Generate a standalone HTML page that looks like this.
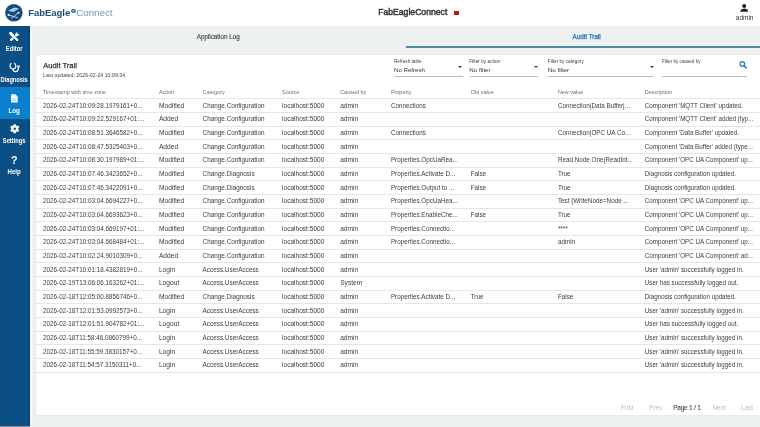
<!DOCTYPE html>
<html>
<head>
<meta charset="utf-8">
<style>
html,body{margin:0;padding:0;width:760px;height:427px;overflow:hidden;background:#eef1f2;font-family:"Liberation Sans",sans-serif;}
#root{position:absolute;left:0;top:0;width:760px;height:427px;will-change:transform;}
.t{position:absolute;white-space:nowrap;line-height:1;}
.abs{position:absolute;}
#header{position:absolute;left:0;top:0;width:760px;height:26px;background:#fff;}
#side{position:absolute;left:0;top:26px;width:30px;height:400px;background:#0c4f84;box-shadow:inset -1.2px 0 0 #0a426f;}
#strip{position:absolute;left:30px;top:26px;width:2px;height:401px;background:#f7f9f9;}
#tabs{position:absolute;left:32px;top:26px;width:728px;height:27px;background:#eef1f2;}
#card{position:absolute;left:35.8px;top:54.5px;width:740px;height:360.5px;background:#fff;box-shadow:0 0 2px rgba(0,0,0,0.10);border-radius:2px;}
.hl{position:absolute;left:35.8px;width:725px;height:0.8px;background:#e6e6e6;}
.ul{position:absolute;height:0.8px;background:#bababa;}
.arrow{position:absolute;width:0;height:0;border-left:2px solid transparent;border-right:2px solid transparent;border-top:2px solid #333;}
.nav{position:absolute;left:-20px;width:68.3px;text-align:center;color:#fff;font-weight:bold;}
</style>
</head>
<body><div id="root">
<div id="header">
  <svg class="abs" style="left:4px;top:3px" width="20" height="20" viewBox="0 0 20 20">
    <circle cx="9.9" cy="9.75" r="8.75" fill="#124a7e"/>
    <path d="M4.2 7.7 L10.1 4.45 L15.0 5.6 L9.4 8.9 Z" fill="#c3d3e2"/>
    <path d="M6.2 6.6 L11.6 7.9 M8.2 5.5 L13.2 6.8 M7.6 8.2 L12.6 5.1" stroke="#8fb0cc" stroke-width="0.35" fill="none"/>
    <path d="M4.5 11.9 L13.6 14.8 M14.5 9.8 L7.5 15.2" stroke="#e6eef5" stroke-width="0.8" fill="none" stroke-linecap="round"/>
    <circle cx="4.5" cy="11.9" r="1.05" fill="#e6eef5"/>
    <circle cx="14.5" cy="9.8" r="1.05" fill="#e6eef5"/>
  </svg>
  <div class="abs" style="left:71.0px;top:8.6px;width:2.6px;height:2.6px;border-radius:50%;background:#7fb0d2;border:0.8px solid #2d6a94"></div>
  <div class="abs" style="left:454.3px;top:11.1px;width:4.5px;height:4.1px;background:#c8101a"></div>

  <svg class="abs" style="left:739px;top:3px" width="10" height="10" viewBox="0 0 10 10">
    <circle cx="5.2" cy="3.1" r="2.0" fill="#222"/>
    <path d="M1.4 8.7 L1.4 7.9 C1.4 6.3 4.2 5.5 5.2 5.5 C6.2 5.5 9.0 6.3 9.0 7.9 L9.0 8.7 Z" fill="#222"/>
  </svg>
</div>

<div id="side">
  <svg class="abs" style="left:9px;top:5.5px" width="11" height="10" viewBox="0 0 11 10">
    <path d="M8.3 2.2 L2.1 7.9" stroke="#fff" stroke-width="2.2" stroke-linecap="round"/>
    <circle cx="8.4" cy="2.1" r="1.95" fill="#fff"/>
    <path d="M7.9 0.2 L8.6 1.9 L10.4 2.4 L10.6 0.2 Z" fill="#0c4f84"/>
    <path d="M2.3 2.1 L8.3 8.0" stroke="#0c4f84" stroke-width="3.0" stroke-linecap="round"/>
    <path d="M2.3 2.1 L8.3 8.0" stroke="#fff" stroke-width="2.3" stroke-linecap="round"/>
    <path d="M1.6 1.2 L3.5 3.2" stroke="#fff" stroke-width="2.9" stroke-linecap="round"/>
  </svg>

  <svg class="abs" style="left:8.5px;top:35.5px" width="12" height="11" viewBox="0 0 12 11">
    <path d="M2.1 1.4 C0.9 2.2 0.6 4.6 1.6 5.8 C2.3 6.7 3.2 6.9 4.0 6.9 C4.8 6.9 5.7 6.6 6.3 5.8 C7.2 4.6 6.9 2.3 5.6 1.5" stroke="#fff" stroke-width="1.2" fill="none" stroke-linecap="round"/>
    <path d="M4.0 6.9 C4.2 8.6 5.2 9.6 6.4 9.6 C8.2 9.6 9.4 8.4 9.4 6.0" stroke="#fff" stroke-width="1.2" fill="none"/>
    <circle cx="9.4" cy="4.6" r="1.4" fill="#fff"/>
    <circle cx="9.4" cy="4.6" r="0.45" fill="#0c4f84"/>
  </svg>

  <div class="abs" style="left:0;top:60.5px;width:30px;height:32.3px;background:#0880cb"></div>
  <svg class="abs" style="left:10.9px;top:68.0px" width="7" height="9" viewBox="0 0 7 9">
    <path d="M0.7 0.2 L4.3 0.2 L6.7 2.6 L6.7 7.9 C6.7 8.3 6.4 8.6 6.0 8.6 L0.8 8.6 C0.4 8.6 0.1 8.3 0.1 7.9 L0.1 0.8 C0.1 0.5 0.4 0.2 0.7 0.2 Z" fill="#fff"/>
    <path d="M4.1 0.4 L4.1 2.8 L6.5 2.8" fill="#cfe3f5"/>
    <rect x="1.6" y="4.5" width="3.5" height="0.75" fill="#7fc0e6"/>
    <rect x="1.6" y="6.2" width="3.5" height="0.75" fill="#7fc0e6"/>
  </svg>

  <svg class="abs" style="left:8.8px;top:96.85px" width="11.5" height="11.5" viewBox="0 0 24 24"><path fill="#fff" fill-rule="evenodd" d="M19.14 12.94c.04-.3.06-.61.06-.94 0-.32-.02-.64-.07-.94l2.03-1.58c.18-.14.23-.41.12-.61l-1.92-3.32c-.12-.22-.37-.29-.59-.22l-2.39.96c-.5-.38-1.03-.7-1.62-.94l-.36-2.54c-.04-.24-.24-.41-.48-.41h-3.84c-.24 0-.43.17-.47.41l-.36 2.54c-.59.24-1.13.57-1.62.94l-2.39-.96c-.22-.08-.47 0-.59.22L2.74 8.87c-.12.21-.08.47.12.61l2.03 1.58c-.05.3-.09.63-.09.94s.02.64.07.94l-2.03 1.58c-.18.14-.23.41-.12.61l1.920 3.32c.12.22.37.29.59.22l2.39-.96c.5.38 1.03.7 1.62.94l.36 2.54c.05.24.24.41.48.41h3.84c.24 0 .44-.17.47-.41l.36-2.54c.59-.24 1.13-.56 1.62-.94l2.39.96c.22.08.47 0 .59-.22l1.92-3.32c.12-.22.07-.47-.12-.61l-2.01-1.58z M12 14.6a2.6 2.6 0 1 0 0-5.2a2.6 2.6 0 1 0 0 5.2z"/></svg>
</div>
<div id="strip"></div>
<div class="abs" style="left:0;top:426px;width:30px;height:1px;background:#8494a6"></div>

<div id="tabs"></div>

<div class="abs" style="left:405.8px;top:46.1px;width:360px;height:1.7px;background:#4d8fa2"></div>

<div id="card"></div>

<!-- filters -->
<div class="arrow" style="left:458.3px;top:66.2px"></div>
<div class="ul" style="left:394.2px;top:76.0px;width:68.4px"></div>
<div class="arrow" style="left:533.5px;top:66.2px"></div>
<div class="ul" style="left:469.5px;top:76.0px;width:68px"></div>
<div class="arrow" style="left:650.1px;top:66.2px"></div>
<div class="ul" style="left:548px;top:76.0px;width:106.3px"></div>
<div class="ul" style="left:662.2px;top:76.0px;width:84.7px"></div>
<svg class="abs" style="left:739px;top:61px" width="8.5" height="8" viewBox="0 0 8.5 8">
  <circle cx="3.3" cy="3.0" r="2.35" stroke="#1f76b5" stroke-width="1.1" fill="none"/>
  <path d="M5.0 4.8 L7.5 7.1" stroke="#1f76b5" stroke-width="1.3" stroke-linecap="round"/>
</svg>

<div class="hl" style="top:98.20px"></div>
<div class="hl" style="top:111.87px"></div>
<div class="hl" style="top:125.54px"></div>
<div class="hl" style="top:139.20px"></div>
<div class="hl" style="top:152.87px"></div>
<div class="hl" style="top:166.54px"></div>
<div class="hl" style="top:180.21px"></div>
<div class="hl" style="top:193.88px"></div>
<div class="hl" style="top:207.54px"></div>
<div class="hl" style="top:221.21px"></div>
<div class="hl" style="top:234.88px"></div>
<div class="hl" style="top:248.55px"></div>
<div class="hl" style="top:262.22px"></div>
<div class="hl" style="top:275.88px"></div>
<div class="hl" style="top:289.55px"></div>
<div class="hl" style="top:303.22px"></div>
<div class="hl" style="top:316.89px"></div>
<div class="hl" style="top:330.56px"></div>
<div class="hl" style="top:344.22px"></div>
<div class="hl" style="top:357.89px"></div>
<div class="hl" style="top:371.56px"></div>
<div class="t" style="left:28.3px;top:8px;font-size:9.6px;color:#1c4d78;font-weight:bold;letter-spacing:-0.1px">FabEagle</div>
<div class="t" style="left:76.3px;top:8px;font-size:9.8px;color:#7097b1;letter-spacing:-0.05px">Connect</div>
<div class="t" style="left:378.2px;top:8px;font-size:8.6px;color:#333;-webkit-text-stroke:0.45px #333;letter-spacing:0.02px">FabEagleConnect</div>
<div class="t" style="left:735.8px;top:15px;font-size:6.47px;color:#333;">admin</div>
<div class="t nav" style="top:46px;font-size:6.4px;color:#fff;font-weight:bold;transform:scaleX(0.897)">Editor</div>
<div class="t nav" style="top:77px;font-size:6.4px;color:#fff;font-weight:bold;transform:scaleX(0.894)">Diagnosis</div>
<div class="t nav" style="top:108px;font-size:6.4px;color:#fff;font-weight:bold;transform:scaleX(0.967)">Log</div>
<div class="t nav" style="top:138px;font-size:6.4px;color:#fff;font-weight:bold;transform:scaleX(0.896)">Settings</div>
<div class="t nav" style="top:155px;font-size:10.7px;color:#fff;font-weight:bold;">?</div>
<div class="t nav" style="top:169px;font-size:6.4px;color:#fff;font-weight:bold;transform:scaleX(0.953)">Help</div>
<div class="t" style="left:196.7px;top:34px;font-size:6.3px;color:#555;-webkit-text-stroke:0.2px #555">Application Log</div>
<div class="t" style="left:572.5px;top:34px;font-size:6.36px;color:#1b72b6;-webkit-text-stroke:0.25px #1b72b6">Audit Trail</div>
<div class="t" style="left:43.2px;top:62px;font-size:7.6px;color:#333;-webkit-text-stroke:0.25px #333">Audit Trail</div>
<div class="t" style="left:43.1px;top:73px;font-size:5.25px;color:#444;">Last updated: 2026-02-24 10:09:34</div>
<div class="t" style="left:394.0px;top:60px;font-size:4.65px;color:#444;">Refresh table</div>
<div class="t" style="left:394.0px;top:67px;font-size:6.1px;color:#333;">No Refresh</div>
<div class="t" style="left:469.3px;top:60px;font-size:4.75px;color:#444;">Filter by action</div>
<div class="t" style="left:469.3px;top:67px;font-size:6.2px;color:#333;">No filter</div>
<div class="t" style="left:547.8px;top:60px;font-size:4.7px;color:#444;">Filter by category</div>
<div class="t" style="left:547.8px;top:67px;font-size:6.2px;color:#333;">No filter</div>
<div class="t" style="left:662.0px;top:60px;font-size:4.6px;color:#444;">Filter by caused by</div>
<div class="t" style="left:621.0px;top:405px;font-size:6.5px;color:#bdbdbd;">First</div>
<div class="t" style="left:649.3px;top:405px;font-size:6.3px;color:#bdbdbd;">Prev</div>
<div class="t" style="left:673.2px;top:405px;font-size:6.5px;color:#4a4a4a;-webkit-text-stroke:0.12px #4a4a4a;letter-spacing:-0.22px">Page 1 / 1</div>
<div class="t" style="left:712.4px;top:405px;font-size:6.4px;color:#bdbdbd;">Next</div>
<div class="t" style="left:741.0px;top:405px;font-size:6.4px;color:#bdbdbd;">Last</div>
<div class="t" style="left:43.0px;top:90px;font-size:5.45px;color:#6e6e6e;">Timestamp with time zone</div>
<div class="t" style="left:158.9px;top:90px;font-size:5.45px;color:#6e6e6e;">Action</div>
<div class="t" style="left:202.6px;top:90px;font-size:5.45px;color:#6e6e6e;">Category</div>
<div class="t" style="left:282.1px;top:90px;font-size:5.45px;color:#6e6e6e;">Source</div>
<div class="t" style="left:340.2px;top:90px;font-size:5.45px;color:#6e6e6e;">Caused by</div>
<div class="t" style="left:390.9px;top:90px;font-size:5.45px;color:#6e6e6e;">Property</div>
<div class="t" style="left:470.7px;top:90px;font-size:5.45px;color:#6e6e6e;">Old value</div>
<div class="t" style="left:557.9px;top:90px;font-size:5.45px;color:#6e6e6e;">New value</div>
<div class="t" style="left:644.8px;top:90px;font-size:5.45px;color:#6e6e6e;">Description</div>
<div class="t" style="left:43.0px;top:103px;font-size:6.32px;color:#3c3c3c;">2026-02-24T10:09:28.1979161+0...</div>
<div class="t" style="left:158.9px;top:103px;font-size:6.7px;color:#3c3c3c;">Modified</div>
<div class="t" style="left:202.6px;top:103px;font-size:6.36px;color:#3c3c3c;">Change.Configuration</div>
<div class="t" style="left:282.1px;top:103px;font-size:6.55px;color:#3c3c3c;">localhost:5000</div>
<div class="t" style="left:340.2px;top:103px;font-size:6.6px;color:#3c3c3c;">admin</div>
<div class="t" style="left:390.9px;top:103px;font-size:6.3px;color:#3c3c3c;">Connections</div>
<div class="t" style="left:557.9px;top:103px;font-size:6.31px;color:#3c3c3c;">Connection|Data Buffer|...</div>
<div class="t" style="left:644.8px;top:103px;font-size:6.28px;color:#3c3c3c;">Component 'MQTT Client' updated.</div>
<div class="t" style="left:43.0px;top:116px;font-size:6.32px;color:#3c3c3c;">2026-02-24T10:09:22.529167+01:...</div>
<div class="t" style="left:158.9px;top:116px;font-size:6.7px;color:#3c3c3c;">Added</div>
<div class="t" style="left:202.6px;top:116px;font-size:6.36px;color:#3c3c3c;">Change.Configuration</div>
<div class="t" style="left:282.1px;top:116px;font-size:6.55px;color:#3c3c3c;">localhost:5000</div>
<div class="t" style="left:340.2px;top:116px;font-size:6.6px;color:#3c3c3c;">admin</div>
<div class="t" style="left:644.8px;top:116px;font-size:6.28px;color:#3c3c3c;">Component 'MQTT Client' added (typ...</div>
<div class="t" style="left:43.0px;top:130px;font-size:6.32px;color:#3c3c3c;">2026-02-24T10:08:51.3646582+0...</div>
<div class="t" style="left:158.9px;top:130px;font-size:6.7px;color:#3c3c3c;">Modified</div>
<div class="t" style="left:202.6px;top:130px;font-size:6.36px;color:#3c3c3c;">Change.Configuration</div>
<div class="t" style="left:282.1px;top:130px;font-size:6.55px;color:#3c3c3c;">localhost:5000</div>
<div class="t" style="left:340.2px;top:130px;font-size:6.6px;color:#3c3c3c;">admin</div>
<div class="t" style="left:390.9px;top:130px;font-size:6.3px;color:#3c3c3c;">Connections</div>
<div class="t" style="left:557.9px;top:130px;font-size:6.31px;color:#3c3c3c;">Connection|OPC UA Co...</div>
<div class="t" style="left:644.8px;top:130px;font-size:6.28px;color:#3c3c3c;">Component 'Data Buffer' updated.</div>
<div class="t" style="left:43.0px;top:144px;font-size:6.32px;color:#3c3c3c;">2026-02-24T10:08:47.5325403+0...</div>
<div class="t" style="left:158.9px;top:144px;font-size:6.7px;color:#3c3c3c;">Added</div>
<div class="t" style="left:202.6px;top:144px;font-size:6.36px;color:#3c3c3c;">Change.Configuration</div>
<div class="t" style="left:282.1px;top:144px;font-size:6.55px;color:#3c3c3c;">localhost:5000</div>
<div class="t" style="left:340.2px;top:144px;font-size:6.6px;color:#3c3c3c;">admin</div>
<div class="t" style="left:644.8px;top:144px;font-size:6.28px;color:#3c3c3c;">Component 'Data Buffer' added (type...</div>
<div class="t" style="left:43.0px;top:157px;font-size:6.32px;color:#3c3c3c;">2026-02-24T10:08:30.197989+01:...</div>
<div class="t" style="left:158.9px;top:157px;font-size:6.7px;color:#3c3c3c;">Modified</div>
<div class="t" style="left:202.6px;top:157px;font-size:6.36px;color:#3c3c3c;">Change.Configuration</div>
<div class="t" style="left:282.1px;top:157px;font-size:6.55px;color:#3c3c3c;">localhost:5000</div>
<div class="t" style="left:340.2px;top:157px;font-size:6.6px;color:#3c3c3c;">admin</div>
<div class="t" style="left:390.9px;top:157px;font-size:6.3px;color:#3c3c3c;">Properties.OpcUaRea...</div>
<div class="t" style="left:557.9px;top:157px;font-size:6.31px;color:#3c3c3c;">Read Node One(ReadInt...</div>
<div class="t" style="left:644.8px;top:157px;font-size:6.28px;color:#3c3c3c;">Component 'OPC UA Component' up...</div>
<div class="t" style="left:43.0px;top:171px;font-size:6.32px;color:#3c3c3c;">2026-02-24T10:07:46.3423652+0...</div>
<div class="t" style="left:158.9px;top:171px;font-size:6.7px;color:#3c3c3c;">Modified</div>
<div class="t" style="left:202.6px;top:171px;font-size:6.36px;color:#3c3c3c;">Change.Diagnosis</div>
<div class="t" style="left:282.1px;top:171px;font-size:6.55px;color:#3c3c3c;">localhost:5000</div>
<div class="t" style="left:340.2px;top:171px;font-size:6.6px;color:#3c3c3c;">admin</div>
<div class="t" style="left:390.9px;top:171px;font-size:6.3px;color:#3c3c3c;">Properties.Activate D...</div>
<div class="t" style="left:470.7px;top:171px;font-size:6.31px;color:#3c3c3c;">False</div>
<div class="t" style="left:557.9px;top:171px;font-size:6.31px;color:#3c3c3c;">True</div>
<div class="t" style="left:644.8px;top:171px;font-size:6.28px;color:#3c3c3c;">Diagnosis configuration updated.</div>
<div class="t" style="left:43.0px;top:185px;font-size:6.32px;color:#3c3c3c;">2026-02-24T10:07:46.3422091+0...</div>
<div class="t" style="left:158.9px;top:185px;font-size:6.7px;color:#3c3c3c;">Modified</div>
<div class="t" style="left:202.6px;top:185px;font-size:6.36px;color:#3c3c3c;">Change.Diagnosis</div>
<div class="t" style="left:282.1px;top:185px;font-size:6.55px;color:#3c3c3c;">localhost:5000</div>
<div class="t" style="left:340.2px;top:185px;font-size:6.6px;color:#3c3c3c;">admin</div>
<div class="t" style="left:390.9px;top:185px;font-size:6.3px;color:#3c3c3c;">Properties.Output to ...</div>
<div class="t" style="left:470.7px;top:185px;font-size:6.31px;color:#3c3c3c;">False</div>
<div class="t" style="left:557.9px;top:185px;font-size:6.31px;color:#3c3c3c;">True</div>
<div class="t" style="left:644.8px;top:185px;font-size:6.28px;color:#3c3c3c;">Diagnosis configuration updated.</div>
<div class="t" style="left:43.0px;top:198px;font-size:6.32px;color:#3c3c3c;">2026-02-24T10:03:04.6694227+0...</div>
<div class="t" style="left:158.9px;top:198px;font-size:6.7px;color:#3c3c3c;">Modified</div>
<div class="t" style="left:202.6px;top:198px;font-size:6.36px;color:#3c3c3c;">Change.Configuration</div>
<div class="t" style="left:282.1px;top:198px;font-size:6.55px;color:#3c3c3c;">localhost:5000</div>
<div class="t" style="left:340.2px;top:198px;font-size:6.6px;color:#3c3c3c;">admin</div>
<div class="t" style="left:390.9px;top:198px;font-size:6.3px;color:#3c3c3c;">Properties.OpcUaHea...</div>
<div class="t" style="left:557.9px;top:198px;font-size:6.31px;color:#3c3c3c;">Test (WriteNode=Node ...</div>
<div class="t" style="left:644.8px;top:198px;font-size:6.28px;color:#3c3c3c;">Component 'OPC UA Component' up...</div>
<div class="t" style="left:43.0px;top:212px;font-size:6.32px;color:#3c3c3c;">2026-02-24T10:03:04.6693623+0...</div>
<div class="t" style="left:158.9px;top:212px;font-size:6.7px;color:#3c3c3c;">Modified</div>
<div class="t" style="left:202.6px;top:212px;font-size:6.36px;color:#3c3c3c;">Change.Configuration</div>
<div class="t" style="left:282.1px;top:212px;font-size:6.55px;color:#3c3c3c;">localhost:5000</div>
<div class="t" style="left:340.2px;top:212px;font-size:6.6px;color:#3c3c3c;">admin</div>
<div class="t" style="left:390.9px;top:212px;font-size:6.3px;color:#3c3c3c;">Properties.EnableChe...</div>
<div class="t" style="left:470.7px;top:212px;font-size:6.31px;color:#3c3c3c;">False</div>
<div class="t" style="left:557.9px;top:212px;font-size:6.31px;color:#3c3c3c;">True</div>
<div class="t" style="left:644.8px;top:212px;font-size:6.28px;color:#3c3c3c;">Component 'OPC UA Component' up...</div>
<div class="t" style="left:43.0px;top:226px;font-size:6.32px;color:#3c3c3c;">2026-02-24T10:03:04.669197+01:...</div>
<div class="t" style="left:158.9px;top:226px;font-size:6.7px;color:#3c3c3c;">Modified</div>
<div class="t" style="left:202.6px;top:226px;font-size:6.36px;color:#3c3c3c;">Change.Configuration</div>
<div class="t" style="left:282.1px;top:226px;font-size:6.55px;color:#3c3c3c;">localhost:5000</div>
<div class="t" style="left:340.2px;top:226px;font-size:6.6px;color:#3c3c3c;">admin</div>
<div class="t" style="left:390.9px;top:226px;font-size:6.3px;color:#3c3c3c;">Properties.Connectio...</div>
<div class="t" style="left:557.9px;top:226px;font-size:6.31px;color:#3c3c3c;">****</div>
<div class="t" style="left:644.8px;top:226px;font-size:6.28px;color:#3c3c3c;">Component 'OPC UA Component' up...</div>
<div class="t" style="left:43.0px;top:239px;font-size:6.32px;color:#3c3c3c;">2026-02-24T10:03:04.668484+01:...</div>
<div class="t" style="left:158.9px;top:239px;font-size:6.7px;color:#3c3c3c;">Modified</div>
<div class="t" style="left:202.6px;top:239px;font-size:6.36px;color:#3c3c3c;">Change.Configuration</div>
<div class="t" style="left:282.1px;top:239px;font-size:6.55px;color:#3c3c3c;">localhost:5000</div>
<div class="t" style="left:340.2px;top:239px;font-size:6.6px;color:#3c3c3c;">admin</div>
<div class="t" style="left:390.9px;top:239px;font-size:6.3px;color:#3c3c3c;">Properties.Connectio...</div>
<div class="t" style="left:557.9px;top:239px;font-size:6.31px;color:#3c3c3c;">admin</div>
<div class="t" style="left:644.8px;top:239px;font-size:6.28px;color:#3c3c3c;">Component 'OPC UA Component' up...</div>
<div class="t" style="left:43.0px;top:253px;font-size:6.32px;color:#3c3c3c;">2026-02-24T10:02:24.9010309+0...</div>
<div class="t" style="left:158.9px;top:253px;font-size:6.7px;color:#3c3c3c;">Added</div>
<div class="t" style="left:202.6px;top:253px;font-size:6.36px;color:#3c3c3c;">Change.Configuration</div>
<div class="t" style="left:282.1px;top:253px;font-size:6.55px;color:#3c3c3c;">localhost:5000</div>
<div class="t" style="left:340.2px;top:253px;font-size:6.6px;color:#3c3c3c;">admin</div>
<div class="t" style="left:644.8px;top:253px;font-size:6.28px;color:#3c3c3c;">Component 'OPC UA Component' ad...</div>
<div class="t" style="left:43.0px;top:267px;font-size:6.32px;color:#3c3c3c;">2026-02-24T10:01:18.4382819+0...</div>
<div class="t" style="left:158.9px;top:267px;font-size:6.7px;color:#3c3c3c;">Login</div>
<div class="t" style="left:202.6px;top:267px;font-size:6.36px;color:#3c3c3c;">Access.UserAccess</div>
<div class="t" style="left:282.1px;top:267px;font-size:6.55px;color:#3c3c3c;">localhost:5000</div>
<div class="t" style="left:340.2px;top:267px;font-size:6.6px;color:#3c3c3c;">admin</div>
<div class="t" style="left:644.8px;top:267px;font-size:6.28px;color:#3c3c3c;">User 'admin' successfully logged in.</div>
<div class="t" style="left:43.0px;top:280px;font-size:6.32px;color:#3c3c3c;">2026-02-19T13:06:06.163262+01:...</div>
<div class="t" style="left:158.9px;top:280px;font-size:6.7px;color:#3c3c3c;">Logout</div>
<div class="t" style="left:202.6px;top:280px;font-size:6.36px;color:#3c3c3c;">Access.UserAccess</div>
<div class="t" style="left:282.1px;top:280px;font-size:6.55px;color:#3c3c3c;">localhost:5000</div>
<div class="t" style="left:340.2px;top:280px;font-size:6.6px;color:#3c3c3c;">System</div>
<div class="t" style="left:644.8px;top:280px;font-size:6.28px;color:#3c3c3c;">User has successfully logged out.</div>
<div class="t" style="left:43.0px;top:294px;font-size:6.32px;color:#3c3c3c;">2026-02-18T12:05:00.8856746+0...</div>
<div class="t" style="left:158.9px;top:294px;font-size:6.7px;color:#3c3c3c;">Modified</div>
<div class="t" style="left:202.6px;top:294px;font-size:6.36px;color:#3c3c3c;">Change.Diagnosis</div>
<div class="t" style="left:282.1px;top:294px;font-size:6.55px;color:#3c3c3c;">localhost:5000</div>
<div class="t" style="left:340.2px;top:294px;font-size:6.6px;color:#3c3c3c;">admin</div>
<div class="t" style="left:390.9px;top:294px;font-size:6.3px;color:#3c3c3c;">Properties.Activate D...</div>
<div class="t" style="left:470.7px;top:294px;font-size:6.31px;color:#3c3c3c;">True</div>
<div class="t" style="left:557.9px;top:294px;font-size:6.31px;color:#3c3c3c;">False</div>
<div class="t" style="left:644.8px;top:294px;font-size:6.28px;color:#3c3c3c;">Diagnosis configuration updated.</div>
<div class="t" style="left:43.0px;top:308px;font-size:6.32px;color:#3c3c3c;">2026-02-18T12:01:53.0992573+0...</div>
<div class="t" style="left:158.9px;top:308px;font-size:6.7px;color:#3c3c3c;">Login</div>
<div class="t" style="left:202.6px;top:308px;font-size:6.36px;color:#3c3c3c;">Access.UserAccess</div>
<div class="t" style="left:282.1px;top:308px;font-size:6.55px;color:#3c3c3c;">localhost:5000</div>
<div class="t" style="left:340.2px;top:308px;font-size:6.6px;color:#3c3c3c;">admin</div>
<div class="t" style="left:644.8px;top:308px;font-size:6.28px;color:#3c3c3c;">User 'admin' successfully logged in.</div>
<div class="t" style="left:43.0px;top:321px;font-size:6.32px;color:#3c3c3c;">2026-02-18T12:01:51.904782+01:...</div>
<div class="t" style="left:158.9px;top:321px;font-size:6.7px;color:#3c3c3c;">Logout</div>
<div class="t" style="left:202.6px;top:321px;font-size:6.36px;color:#3c3c3c;">Access.UserAccess</div>
<div class="t" style="left:282.1px;top:321px;font-size:6.55px;color:#3c3c3c;">localhost:5000</div>
<div class="t" style="left:340.2px;top:321px;font-size:6.6px;color:#3c3c3c;">admin</div>
<div class="t" style="left:644.8px;top:321px;font-size:6.28px;color:#3c3c3c;">User has successfully logged out.</div>
<div class="t" style="left:43.0px;top:335px;font-size:6.32px;color:#3c3c3c;">2026-02-18T11:58:46.0860799+0...</div>
<div class="t" style="left:158.9px;top:335px;font-size:6.7px;color:#3c3c3c;">Login</div>
<div class="t" style="left:202.6px;top:335px;font-size:6.36px;color:#3c3c3c;">Access.UserAccess</div>
<div class="t" style="left:282.1px;top:335px;font-size:6.55px;color:#3c3c3c;">localhost:5000</div>
<div class="t" style="left:340.2px;top:335px;font-size:6.6px;color:#3c3c3c;">admin</div>
<div class="t" style="left:644.8px;top:335px;font-size:6.28px;color:#3c3c3c;">User 'admin' successfully logged in.</div>
<div class="t" style="left:43.0px;top:349px;font-size:6.32px;color:#3c3c3c;">2026-02-18T11:55:59.3830157+0...</div>
<div class="t" style="left:158.9px;top:349px;font-size:6.7px;color:#3c3c3c;">Login</div>
<div class="t" style="left:202.6px;top:349px;font-size:6.36px;color:#3c3c3c;">Access.UserAccess</div>
<div class="t" style="left:282.1px;top:349px;font-size:6.55px;color:#3c3c3c;">localhost:5000</div>
<div class="t" style="left:340.2px;top:349px;font-size:6.6px;color:#3c3c3c;">admin</div>
<div class="t" style="left:644.8px;top:349px;font-size:6.28px;color:#3c3c3c;">User 'admin' successfully logged in.</div>
<div class="t" style="left:43.0px;top:362px;font-size:6.32px;color:#3c3c3c;">2026-02-18T11:54:57.3150311+0...</div>
<div class="t" style="left:158.9px;top:362px;font-size:6.7px;color:#3c3c3c;">Login</div>
<div class="t" style="left:202.6px;top:362px;font-size:6.36px;color:#3c3c3c;">Access.UserAccess</div>
<div class="t" style="left:282.1px;top:362px;font-size:6.55px;color:#3c3c3c;">localhost:5000</div>
<div class="t" style="left:340.2px;top:362px;font-size:6.6px;color:#3c3c3c;">admin</div>
<div class="t" style="left:644.8px;top:362px;font-size:6.28px;color:#3c3c3c;">User 'admin' successfully logged in.</div>

<!-- pagination -->
</div></body>
</html>
